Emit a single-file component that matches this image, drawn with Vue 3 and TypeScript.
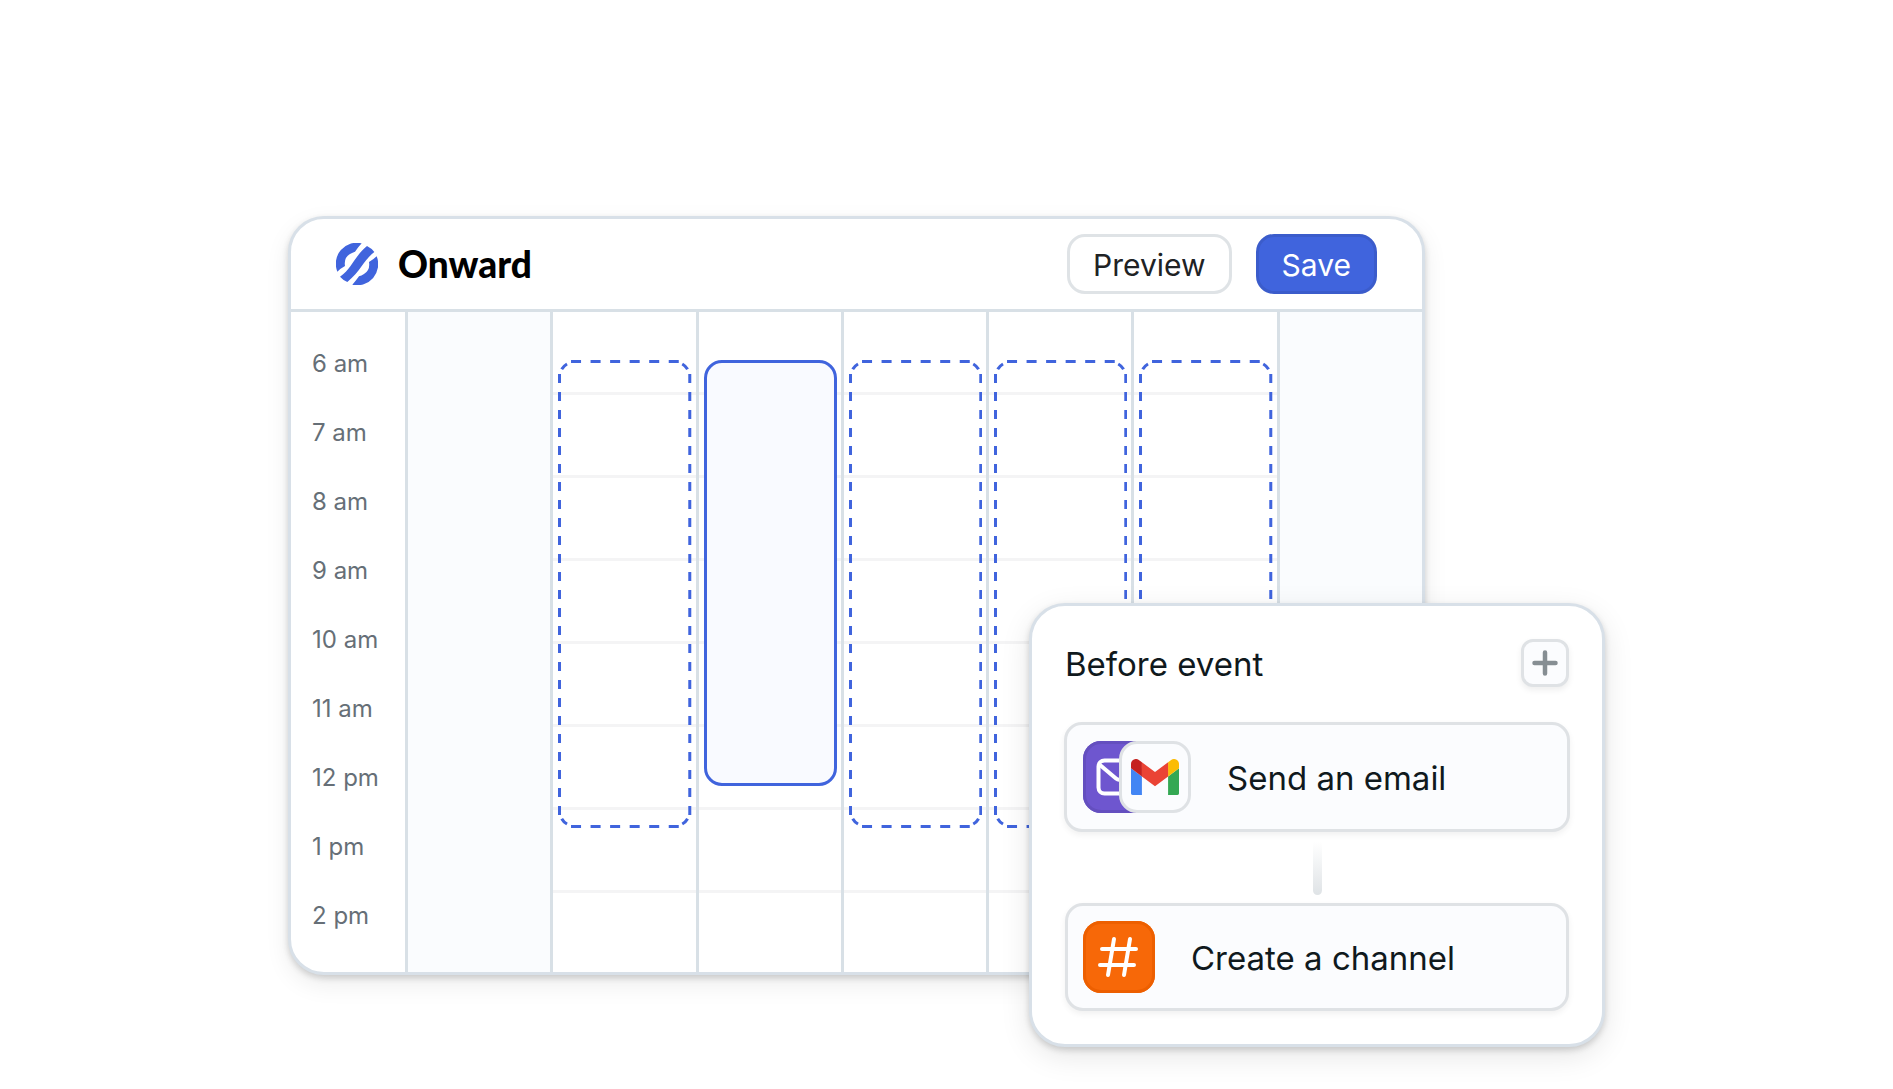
<script setup lang="ts">
interface Day {
  name: string
  weekend?: boolean
  slot?: 'open' | 'selected'
}

const hours: string[] = ['6 am', '7 am', '8 am', '9 am', '10 am', '11 am', '12 pm', '1 pm', '2 pm']

const days: Day[] = [
  { name: 'sun', weekend: true },
  { name: 'mon', slot: 'open' },
  { name: 'tue', slot: 'selected' },
  { name: 'wed', slot: 'open' },
  { name: 'thu', slot: 'open' },
  { name: 'fri', slot: 'open' },
  { name: 'sat', weekend: true },
]
</script>

<template>
  <main class="stage">
    <section class="planner">
      <header class="topbar">
        <div class="brand">
          <svg class="brand-mark" viewBox="0 0 126 126" aria-hidden="true">
            <g fill="#4064dd">
              <path d="M77 1A63 63 0 0 0 4 86Q14 76 27 69Q23 44 42 33Q50 28 57 26Q66 13 77 1Z" />
              <path d="M49 125A63 63 0 0 0 122 40Q112 50 99 57Q103 82 84 93Q76 98 69 100Q60 113 49 125Z" />
              <path d="M93 9A63 63 0 0 1 115 27C84 50 76 82 34 117A63 63 0 0 1 12 101C48 76 52 44 93 9Z" />
            </g>
          </svg>
          <span class="brand-name">Onward</span>
        </div>
        <div class="actions">
          <button type="button" class="btn">Preview</button>
          <button type="button" class="btn primary">Save</button>
        </div>
      </header>

      <div class="calendar">
        <ol class="hours">
          <li v-for="hour in hours" :key="hour">{{ hour }}</li>
        </ol>
        <div v-for="day in days" :key="day.name" class="day" :class="{ weekend: day.weekend }">
          <svg
            v-if="day.slot === 'open'"
            class="slot open"
            viewBox="0 0 133 468"
            preserveAspectRatio="none"
            aria-hidden="true"
          >
            <g fill="none" stroke="#4064dd" stroke-width="3">
              <path d="M13 1.5H120.5M13 466.500H120.500" stroke-dasharray="10 9.5" />
              <path d="M1.5 14V455M131.500 14V455" stroke-dasharray="9 9" />
              <path d="M3.700 9.300Q5.500 6 9 4M129.300 9.300Q127.500 6 124 4M3.700 458.700Q5.500 462 9 464M129.300 458.700Q127.500 462 124 464" />
            </g>
          </svg>
          <div v-else-if="day.slot === 'selected'" class="slot selected"></div>
        </div>
      </div>
    </section>

    <section class="workflow">
      <header class="workflow-head">
        <h2>Before event</h2>
        <button type="button" class="add" aria-label="Add step">
          <svg viewBox="0 0 42 42" aria-hidden="true">
            <path d="M21 10.500V31.500M10.500 21H31.500" fill="none" stroke="#868e93" stroke-width="4.500" stroke-linecap="round" />
          </svg>
        </button>
      </header>

      <div class="step email">
        <div class="icons">
          <span class="tile purple">
            <svg viewBox="0 0 72 72" aria-hidden="true">
              <g fill="none" stroke="#fff" stroke-width="4" stroke-linejoin="round">
                <rect x="15.500" y="19.500" width="41" height="33" rx="6" />
                <path d="M17 24L33 37.500Q36 40 39 37.500L55 24" />
              </g>
            </svg>
          </span>
          <span class="tile light">
            <svg class="gmail" viewBox="52 42 88 66" aria-hidden="true">
              <path fill="#4285f4" d="M55 108h17V74L52 59v46c0 2 1 3 3 3" />
              <path fill="#34a853" d="M120 108h17c2 0 3-1 3-3V59l-20 15" />
              <path fill="#fbbc04" d="M120 48v26l20-15v-8c0-7.420-8.470-11.650-14.400-7.200" />
              <path fill="#ea4335" d="M72 74V48l24 18 24-18v26L96 92" />
              <path fill="#c5221f" d="M52 51v8l20 15V48l-5.600-4.200c-5.940-4.450-14.400-.220-14.400 7.200" />
            </svg>
          </span>
        </div>
        <span class="step-name">Send an email</span>
      </div>

      <div class="connector"></div>

      <div class="step">
        <div class="icons">
          <span class="tile orange">
            <svg viewBox="0 0 72 72" aria-hidden="true">
              <path
                d="M31 18L25 54M47 18L41 54M19 28H53M17 44H51"
                fill="none"
                stroke="#fff"
                stroke-width="4"
                stroke-linecap="round"
              />
            </svg>
          </span>
        </div>
        <span class="step-name">Create a channel</span>
      </div>
    </section>
  </main>
</template>

<style>
body {
  margin: 0;
  background: #fff;
}
</style>

<style scoped>
* {
  box-sizing: border-box;
}

.stage {
  position: relative;
  max-width: 1317px;
  margin: 0 auto;
  padding: 216px 0 114px;
  font-family: Inter, "Liberation Sans", sans-serif;
  color: #10191d;
}

.planner {
  margin-right: 180px;
  overflow: hidden;
  border: 3px solid #d8e0e8;
  border-radius: 36px;
  background: #fff;
  box-shadow: 0 3px 6px rgba(0, 0, 0, 0.16), 0 9px 24px rgba(0, 0, 0, 0.08);
}

.topbar {
  display: flex;
  align-items: center;
  justify-content: space-between;
  padding: 15px 45px;
  border-bottom: 3px solid #d8e0e6;
}

.brand {
  display: flex;
  align-items: center;
  gap: 20px;
}

.brand-mark {
  width: 42px;
  height: 42px;
}

.brand-name {
  font-family: Lato, Inter, sans-serif;
  font-size: 37px;
  font-weight: 900;
  line-height: 42px;
  color: #000;
}

.actions {
  display: flex;
  gap: 24px;
}

.btn {
  height: 60px;
  padding: 2px 23px 0;
  border: 3px solid #dfe3e6;
  border-radius: 18px;
  background: #fff;
  color: #202224;
  font-family: inherit;
  font-size: 30px;
  line-height: 36px;
}

.btn.primary {
  border-color: #3b5ccb;
  background: #4064dd;
  color: #fff;
}

.calendar {
  display: flex;
}

.hours {
  flex: 0 0 114px;
  margin: 0;
  padding: 17px 0 22px 21px;
  list-style: none;
  font-size: 24px;
  line-height: 69px;
  color: #666f77;
}

.day {
  flex: 1;
  padding: 48px 4px 0 5px;
  border-left: 3px solid #d8e0e6;
  background: repeating-linear-gradient(#fff 0 80px, #f4f4f5 80px 83px);
}

.day.weekend {
  background: #fafcfe;
}

.slot {
  display: block;
  width: 100%;
}

.slot.open {
  height: 468px;
}

.slot.selected {
  height: 426px;
  border: 3px solid #4064dd;
  border-radius: 18px;
  background: #f9faff;
}

.workflow {
  position: absolute;
  top: 603px;
  right: 0;
  width: 576px;
  padding: 33px;
  border: 3px solid #d8e0e8;
  border-radius: 36px;
  background: #fff;
  box-shadow: 0 3px 6px rgba(0, 0, 0, 0.16), 0 9px 30px rgba(0, 0, 0, 0.1);
}

.workflow-head {
  display: flex;
  align-items: center;
  justify-content: space-between;
  margin-bottom: 35px;
}

h2 {
  margin: 0;
  padding-top: 2px;
  font-size: 33px;
  font-weight: 400;
  line-height: 44px;
}

.add {
  width: 48px;
  height: 48px;
  padding: 0;
  border: 3px solid #dfe2e5;
  border-radius: 12px;
  background: #fbfcfe;
  box-shadow: 0 3px 6px rgba(0, 0, 0, 0.07);
}

.add svg {
  display: block;
}

.step {
  display: flex;
  align-items: center;
  gap: 36px;
  height: 108px;
  padding: 0 15px;
  border: 3px solid #dfe2e5;
  border-radius: 18px;
  background: #fbfcfe;
  box-shadow: 0 3px 6px rgba(0, 0, 0, 0.06);
}

.step.email {
  height: 110px;
  margin: 0 -1px;
  padding: 0 16px;
}

.icons {
  display: flex;
}

.tile {
  display: flex;
  align-items: center;
  justify-content: center;
  width: 72px;
  height: 72px;
  border-radius: 18px;
}

.tile svg {
  width: 72px;
  height: 72px;
}

.tile.purple {
  background: #6e56cf;
  box-shadow: inset 0 0 0 3px #644fbf;
}

.tile.light {
  margin-left: -36px;
  border: 3px solid #dfe2e5;
  background: #fbfcfe;
}

.tile .gmail {
  width: 48px;
  height: 36px;
}

.tile.orange {
  background: #f76808;
  box-shadow: inset 0 0 0 3px #ed5f00;
}

.step-name {
  padding-top: 2px;
  font-size: 33px;
  line-height: 44px;
}

.connector {
  width: 9px;
  height: 53px;
  margin: 10px auto 8px;
  border-radius: 0 0 5px 5px;
  background: linear-gradient(rgba(223, 226, 229, 0), #dfe3e6);
}
</style>
